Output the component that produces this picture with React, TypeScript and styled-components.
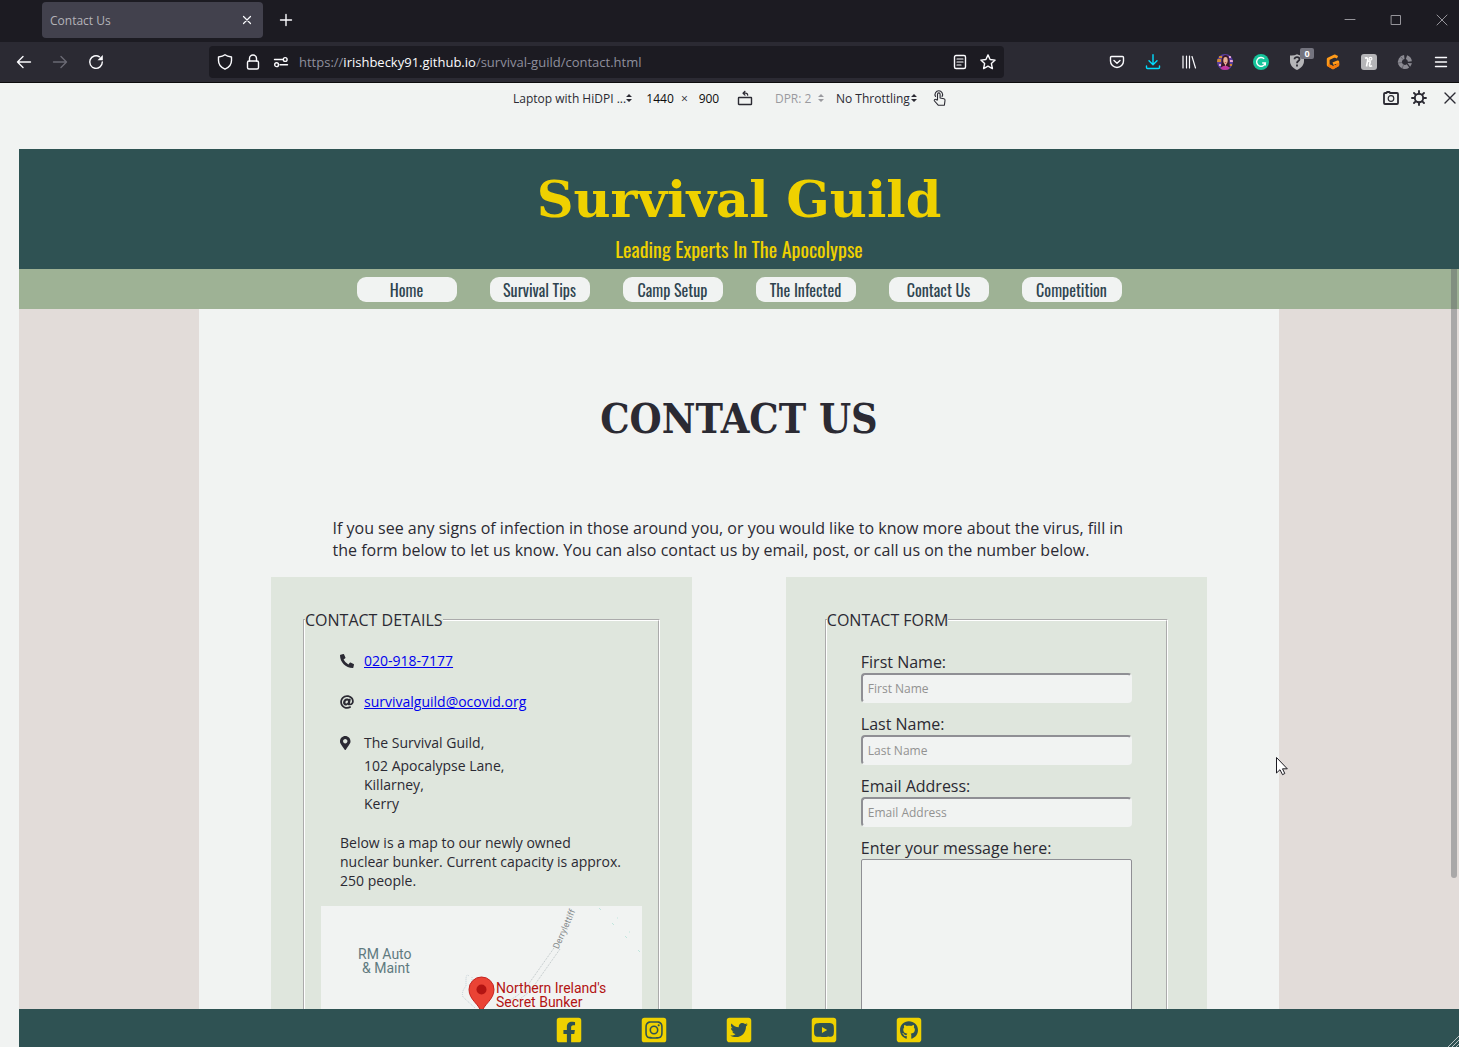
import React from "react";
import styled, { createGlobalStyle } from "styled-components";
import {
  FaAt,
  FaFacebookSquare,
  FaGithubSquare,
  FaInstagramSquare,
  FaMapMarkerAlt,
  FaPhoneAlt,
  FaTwitterSquare,
  FaYoutubeSquare,
} from "react-icons/fa";

const color = {
  frame: "#1c1b22",
  toolbar: "#2b2a33",
  tab: "#42414d",
  paper: "#f1f3f2",
  teal: "#2f5253",
  yellow: "#efd100",
  sage: "#9eb295",
  mist: "#dfe6dd",
  sand: "#e2dcd9",
  ink: "#2b2a33",
};

const ui = `"Open Sans", "Noto Sans", sans-serif`;
const typewriter = `"Special Elite", "DejaVu Serif", serif`;
const typewriterCondensed = `"Special Elite", "DejaVu Serif Condensed", "DejaVu Serif", serif`;
const narrow = `Oswald, "Liberation Sans Narrow", "Roboto Condensed", sans-serif`;

const GlobalStyle = createGlobalStyle`
  *, *::before, *::after { box-sizing: border-box; }
  body { margin: 0; background: ${color.paper}; color: ${color.ink}; font-family: ${ui}; }
  button, input, select, textarea { font: inherit; color: inherit; margin: 0; }
  svg { display: block; }
`;

/* ---------- browser window ---------- */

const Window = styled.div`
  position: relative;
  display: flex;
  flex-direction: column;
  height: 100vh;
  overflow: hidden;
`;

const TabStrip = styled.header`
  display: flex;
  align-items: center;
  justify-content: space-between;
  height: 42px;
  flex: none;
  padding-left: 42px;
  background: ${color.frame};
  color: #fbfbfe;
`;

const Tabs = styled.div`
  display: flex;
  align-items: center;
  gap: 8px;
  padding-bottom: 2px;
`;

const Tab = styled.div`
  display: flex;
  align-items: center;
  justify-content: space-between;
  width: 221px;
  height: 36px;
  padding: 0 4px 0 8px;
  border-radius: 4px;
  background: ${color.tab};
  color: #b4b3b9;
  font-size: 12px;
`;

const IconButton = styled.button<{ $w?: number; $h?: number; $tone?: string }>`
  display: grid;
  place-items: center;
  position: relative;
  flex: none;
  width: ${(p) => p.$w ?? 36}px;
  height: ${(p) => p.$h ?? 32}px;
  padding: 0;
  border: 0;
  background: none;
  color: ${(p) => p.$tone ?? "#fbfbfe"};
`;

const WindowButtons = styled.div`
  display: flex;
  gap: 12px;
  padding-bottom: 2px;
`;

const NavBar = styled.div`
  display: flex;
  align-items: center;
  height: 41px;
  flex: none;
  padding-left: 6px;
  background: ${color.toolbar};
  border-bottom: 1px solid #0c0c0d;
  color: #fbfbfe;
`;

const AddressBar = styled.div`
  display: flex;
  align-items: center;
  flex: 1;
  min-width: 0;
  height: 32px;
  margin: 0 95px;
  padding: 0 2px;
  border-radius: 4px;
  background: ${color.frame};
`;

const Address = styled.div`
  flex: 1;
  padding-left: 4px;
  overflow: hidden;
  white-space: nowrap;
  font-size: 13px;
  color: #8f8f9d;
  strong { font-weight: 400; color: #fbfbfe; }
`;

const Badge = styled.span`
  position: absolute;
  top: 2px;
  left: 21px;
  width: 14px;
  height: 11px;
  border-radius: 2px;
  background: #74747f;
  color: #fff;
  font-size: 9px;
  font-weight: 700;
  line-height: 11px;
`;

/* ---------- responsive design toolbar ---------- */

const DeviceBar = styled.div`
  display: grid;
  grid-template-columns: 1fr auto 1fr;
  align-items: center;
  height: 30px;
  flex: none;
  font-size: 12px;
`;

const DeviceControls = styled.div`
  display: flex;
  align-items: center;
  grid-column: 2;
  padding-left: 7px;
`;

const DeviceActions = styled.div`
  display: flex;
  justify-content: flex-end;
  align-items: center;
  button:last-child { margin-left: 8px; }
`;

const Picker = styled.label<{ $w: number; $muted?: boolean }>`
  display: flex;
  align-items: center;
  width: ${(p) => p.$w}px;
  color: ${(p) => (p.$muted ? "#9a9a9f" : color.ink)};
  select {
    appearance: none;
    flex: 1;
    min-width: 0;
    padding: 0;
    border: 0;
    background: none;
    opacity: 1;
  }
`;

const SizeInput = styled.input`
  width: 34px;
  padding: 0;
  border: 0;
  background: none;
  text-align: center;
  color: #0c0c0d;
`;

const Sizes = styled.div`
  display: flex;
  align-items: center;
  gap: 4px;
  margin: 0 4px 0 11px;
`;

const Ratio = styled.div`
  margin: 0 12px 0 15px;
`;

const Throttle = styled.div`
  margin-right: 8px;
`;

/* ---------- site ---------- */

const Site = styled.div`
  position: relative;
  display: flex;
  flex-direction: column;
  flex: 1;
  min-height: 0;
  margin: 36px 0 0 19px;
  background: ${color.sand};
`;

const Masthead = styled.header`
  flex: none;
  height: 120px;
  padding-top: 20px;
  background: ${color.teal};
  color: ${color.yellow};
  text-align: center;
`;

const SiteName = styled.p`
  margin: 0;
  font: 700 51px/60px ${typewriter};
`;

const Tagline = styled.p`
  margin: 5px 0 0;
  font: 400 20px/30px ${narrow};
`;

const Menu = styled.nav`
  display: flex;
  justify-content: center;
  gap: 33px;
  flex: none;
  height: 40px;
  padding-top: 8px;
  background: ${color.sage};
`;

const MenuLink = styled.a`
  width: 100px;
  height: 25px;
  border-radius: 9px;
  background: ${color.paper};
  color: #2f4550;
  font: 400 16px/26px ${narrow};
  text-align: center;
  text-decoration: none;
`;

const Scroller = styled.div`
  flex: 1;
  min-height: 0;
  overflow: hidden;
`;

const Main = styled.main`
  width: 75%;
  margin: 0 auto;
  background: ${color.paper};
`;

const PageTitle = styled.h1`
  margin: 0;
  padding: 80px 0 68px;
  font: 700 41px/60px ${typewriterCondensed};
  text-align: center;
`;

const Intro = styled.p`
  margin: 0 auto 16px;
  max-width: 813px;
  font-size: 16px;
  line-height: 22px;
`;

const Cards = styled.div`
  display: flex;
  justify-content: space-between;
  padding: 0 72px;
`;

const Card = styled.section<{ $side: number }>`
  width: 45%;
  padding: 32px ${(p) => p.$side}px;
  background: ${color.mist};
`;

const Group = styled.fieldset`
  min-width: 0;
  margin: 0;
  padding: 0;
  border: 2px groove #ffffff;
  legend {
    padding: 0;
    font-size: 16px;
    line-height: 22px;
  }
`;

const GroupBody = styled.div<{ $side: number }>`
  padding: 20px ${(p) => p.$side}px 32px;
`;

const Details = styled.div`
  padding: 0 20px 0 19px;
  font-size: 14px;
  line-height: 19px;
  a { color: #0000ee; }
  p { margin: 20px 0 16px; }
`;

const Rows = styled.ul`
  display: grid;
  gap: 22px;
  margin: 0;
  padding: 0;
  list-style: none;
`;

const Row = styled.li`
  display: grid;
  grid-template-columns: 24px 1fr;
  align-items: center;
`;

const PostalAddress = styled.address`
  margin: 4px 0 0 24px;
  font-style: normal;
`;

const MapFrame = styled.figure`
  position: relative;
  height: 220px;
  margin: 0;
  overflow: hidden;
  background: ${color.paper};
  font: 14px/14px Roboto, sans-serif;
`;

const MapLabel = styled.span<{ $x: number; $y: number; $tone: string }>`
  position: absolute;
  left: ${(p) => p.$x}px;
  top: ${(p) => p.$y}px;
  color: ${(p) => p.$tone};
  white-space: nowrap;
`;

const RoadLabel = styled(MapLabel)`
  font-size: 9px;
  transform: rotate(-66deg);
`;

const Field = styled.div`
  margin-bottom: 10px;
  label {
    display: block;
    font-size: 16px;
    line-height: 22px;
  }
`;

const TextInput = styled.input`
  display: block;
  width: 100%;
  height: 30px;
  padding: 0 5px;
  border: 2px solid;
  border-color: #8f8f94 ${color.paper} ${color.paper} #8f8f94;
  border-radius: 4px;
  background: ${color.paper};
  font: 12px ${ui};
  &::placeholder { color: #929291; opacity: 1; }
`;

const Message = styled.textarea`
  display: block;
  width: 100%;
  height: 240px;
  border: 1px solid #8f8f94;
  border-radius: 2px;
  background: ${color.paper};
  resize: none;
`;

const Footer = styled.footer`
  display: flex;
  justify-content: center;
  gap: 57px;
  flex: none;
  height: 38px;
  padding-top: 7px;
  background: ${color.teal};
  font-size: 28px;
  a { color: ${color.yellow}; height: 28px; }
`;

const ScrollThumb = styled.div`
  position: absolute;
  top: 120px;
  right: 2px;
  width: 6px;
  height: 609px;
  border-radius: 0 0 3px 3px;
  background: rgba(90, 95, 100, 0.42);
`;

const Resizer = styled.svg`
  position: absolute;
  right: 0;
  bottom: 0;
`;

const Pointer = styled.svg`
  position: absolute;
  left: 1275px;
  top: 756px;
`;

/* ---------- icons ---------- */

const Icon = ({ size = 16, children, w = 1.4 }: { size?: number; w?: number; children: React.ReactNode }) => (
  <svg
    width={size}
    height={size}
    viewBox="0 0 16 16"
    fill="none"
    stroke="currentColor"
    strokeWidth={w}
    strokeLinecap="round"
    strokeLinejoin="round"
    aria-hidden="true"
  >
    {children}
  </svg>
);

const UpDown = () => (
  <svg width="6" height="8" viewBox="0 0 6 8" fill="currentColor" aria-hidden="true">
    <path d="M3 0 6 3H0zM3 8 0 5h6z" />
  </svg>
);

const fields = [
  { id: "first", label: "First Name:", hint: "First Name", type: "text" },
  { id: "last", label: "Last Name:", hint: "Last Name", type: "text" },
  { id: "email", label: "Email Address:", hint: "Email Address", type: "email" },
];

const menu = ["Home", "Survival Tips", "Camp Setup", "The Infected", "Contact Us", "Competition"];

const social = [
  { name: "Facebook", Glyph: FaFacebookSquare },
  { name: "Instagram", Glyph: FaInstagramSquare },
  { name: "Twitter", Glyph: FaTwitterSquare },
  { name: "YouTube", Glyph: FaYoutubeSquare },
  { name: "GitHub", Glyph: FaGithubSquare },
];

function BrowserChrome() {
  return (
    <>
      <TabStrip>
        <Tabs>
          <Tab>
            Contact Us
            <IconButton $w={24} $h={24} aria-label="Close tab">
              <Icon w={1.2}><path d="m4.5 4.5 7 7m0-7-7 7" /></Icon>
            </IconButton>
          </Tab>
          <IconButton $w={30} aria-label="New tab">
            <Icon><path d="M8 2.5v11M2.5 8h11" /></Icon>
          </IconButton>
        </Tabs>
        <WindowButtons>
          <IconButton $w={34} $tone="#96959b" aria-label="Minimize">
            <Icon w={1}><path d="M3 7.5h10" /></Icon>
          </IconButton>
          <IconButton $w={34} $tone="#96959b" aria-label="Maximize">
            <Icon w={1}><path d="M3.5 3.5h9v9h-9z" strokeLinejoin="miter" /></Icon>
          </IconButton>
          <IconButton $w={34} $tone="#96959b" aria-label="Close window">
            <Icon w={1}><path d="m3 3 10 10M13 3 3 13" /></Icon>
          </IconButton>
        </WindowButtons>
      </TabStrip>

      <NavBar>
        <IconButton aria-label="Back">
          <Icon><path d="M14.5 8h-13M7 2.5 1.5 8 7 13.5" /></Icon>
        </IconButton>
        <IconButton $tone="#6a6974" aria-label="Forward">
          <Icon><path d="M1.5 8h13M9 2.5 14.5 8 9 13.5" /></Icon>
        </IconButton>
        <IconButton aria-label="Reload">
          <Icon>
            <path d="M14.3 8A6.3 6.3 0 1 1 11.5 2.8" />
            <path d="M14.8 1v5.3H9.5z" fill="currentColor" stroke="none" />
          </Icon>
        </IconButton>

        <AddressBar>
          <IconButton $w={28} aria-label="Tracking protection">
            <Icon><path d="M8 .8C9.5 2 12 2.7 14.5 3v3.5c0 4-2.5 7-6.5 8.7C4 13.5 1.5 10.5 1.5 6.5V3C4 2.7 6.5 2 8 .8z" /></Icon>
          </IconButton>
          <IconButton $w={28} aria-label="Site security">
            <Icon>
              <rect x="2.5" y="7" width="11" height="8" rx="1.5" />
              <path d="M4.5 7V4.5a3.5 3.5 0 0 1 7 0V7" />
            </Icon>
          </IconButton>
          <IconButton $w={28} aria-label="Permissions">
            <Icon>
              <path d="M1.5 5.5h8M7 10.7h7.5" />
              <circle cx="12.2" cy="5.5" r="1.9" />
              <circle cx="3.6" cy="10.7" r="1.9" />
            </Icon>
          </IconButton>
          <Address role="textbox" aria-label="Address" contentEditable suppressContentEditableWarning spellCheck={false}>
            https://<strong>irishbecky91.github.io</strong>/survival-guild/contact.html
          </Address>
          <IconButton $w={28} aria-label="Reader view">
            <Icon>
              <rect x="2.5" y="1.5" width="11" height="13" rx="1.5" />
              <path d="M5 5h6M5 8h6M5 11h4" strokeWidth="1.2" />
            </Icon>
          </IconButton>
          <IconButton $w={28} aria-label="Bookmark">
            <Icon>
              <path d="m8 .9 2.1 4.6 5 .6-3.7 3.5 1 5L8 12.1l-4.4 2.5 1-5L.9 6.1l5-.6z" />
            </Icon>
          </IconButton>
        </AddressBar>

        <IconButton aria-label="Pocket">
          <Icon>
            <path d="M2.5 2.5h11a1 1 0 0 1 1 1V7a6.5 6.5 0 0 1-13 0V3.500a1 1 0 0 1 1-1z" />
            <path d="M5 6.5 8 9.3l3-2.8" />
          </Icon>
        </IconButton>
        <IconButton $tone="#00ddff" aria-label="Downloads">
          <Icon><path d="M8 .8v9.5M4 6.8l4 4 4-4M1.500 12v1.500a1 1 0 0 0 1 1h11a1 1 0 0 0 1-1V12" /></Icon>
        </IconButton>
        <IconButton aria-label="Library">
          <Icon w={1.2}><path d="M2 2v12M5.5 2v12M8.5 2v12M11 2.5l3.500 11.500" /></Icon>
        </IconButton>
        <IconButton aria-label="Account">
          <svg width="16" height="16" viewBox="0 0 16 16" aria-hidden="true">
            <clipPath id="face"><circle cx="8" cy="8" r="8" /></clipPath>
            <g clipPath="url(#face)">
              <path fill="#5b3fa0" d="M0 0h16v16H0z" />
              <path fill="#d08a34" d="M0 5h4v3H0zM2 2h3v2H2z" />
              <path fill="#e8a6d8" d="M13 6h3v2h-3zM2 10h2v2H2zM12 2h2v2h-2z" />
              <path fill="#d08a34" d="M12 10h3v2h-3z" />
              <path fill="#3b1828" d="M5 4c1-4 6-4 7 0l1 9H4z" />
              <ellipse cx="8.5" cy="6.5" rx="2.2" ry="3.4" fill="#e8b196" />
              <path fill="#c2379f" d="M3 16c1-5 9-6 10 0z" />
              <path fill="#e8b196" d="M7.3 9h2.2l-.8 3.5z" />
              <path fill="#b92f3c" d="M7.5 8h2l-1 .9z" />
            </g>
          </svg>
        </IconButton>
        <IconButton aria-label="Grammar checker">
          <svg width="16" height="16" viewBox="0 0 16 16" fill="none" aria-hidden="true">
            <circle cx="8" cy="8" r="8" fill="#15c39a" />
            <path d="M11.2 4.8A4.4 4.4 0 1 0 12.3 9H9.2m3.1 0v2.6" stroke="#fff" strokeWidth="1.4" />
          </svg>
        </IconButton>
        <IconButton aria-label="Privacy extension">
          <svg width="16" height="16" viewBox="0 0 16 16" fill="none" aria-hidden="true">
            <path d="M1 1.5Q5 2 8 .2 11 2 15 1.500V7c0 4-2.500 7-7 9C3.500 14 1 11 1 7z" fill="#b5b5b8" />
            <path d="M5.5 5.3C5.5 2.3 10.5 2.5 10.5 5.2 10.5 7.2 8 7 8 9.2M8 10.5v2" stroke="#2b2a33" strokeWidth="1.8" />
          </svg>
          <Badge>0</Badge>
        </IconButton>
        <IconButton aria-label="Price tracker">
          <svg width="16" height="16" viewBox="0 0 16 16" fill="none" strokeLinejoin="round" aria-hidden="true">
            <path d="M12.5 3.2 9.5 1.9 3.2 5v6l4.8 2.8 4.8-2.8V7.8L8 9.8" stroke="#ff9b1a" strokeWidth="2.8" />
            <path d="M3.2 11l4.8 2.8 4.8-2.8V9" stroke="#f27a0c" strokeWidth="2.8" />
          </svg>
        </IconButton>
        <IconButton aria-label="Coupons">
          <svg width="16" height="16" viewBox="0 0 16 16" fill="none" aria-hidden="true">
            <rect width="16" height="16" rx="3" fill="#b5b5b8" />
            <path d="M4 4.200c2-1 3 .3 2.700 2L5.500 12.500M6.300 8c1.500-1.500 3-1.300 2.800.3L8.500 11c-.2 1.500 1.500 1.500 2.500.6" stroke="#fff" strokeWidth="1.6" />
            <circle cx="9.5" cy="4.7" r="1.4" stroke="#fff" strokeWidth="1.2" />
          </svg>
        </IconButton>
        <IconButton $tone="#8b8a92" aria-label="Site data extension">
          <svg width="16" height="16" viewBox="0 0 16 16" fill="none" stroke="currentColor" aria-hidden="true">
            <path d="M11 11.900A5 5 0 1 1 7.300 3" strokeWidth="4" />
            <path d="M9.500 3.200A5 5 0 0 1 12.900 7.500" strokeWidth="4" />
            <path d="m10.500 9 4.500.2-1.800 3.500z" fill="currentColor" stroke="none" />
            <path d="m3.500 2.500 2.500 3M1 9l4-.5M5 14.500l1.500-3.500" stroke="#5a5963" strokeWidth=".8" />
          </svg>
        </IconButton>
        <IconButton aria-label="Application menu">
          <Icon w={1.4}><path d="M2.5 3.5h11M2.500 8h11M2.500 12.500h11" /></Icon>
        </IconButton>
      </NavBar>
    </>
  );
}

function DeviceToolbar() {
  return (
    <DeviceBar>
      <DeviceControls>
        <Picker $w={119}>
          <select aria-label="Device"><option>Laptop with HiDPI ...</option></select>
          <UpDown />
        </Picker>
        <Sizes>
          <SizeInput aria-label="Width" defaultValue="1440" />
          <span>×</span>
          <SizeInput aria-label="Height" defaultValue="900" />
        </Sizes>
        <IconButton $w={30} $h={28} $tone={color.ink} aria-label="Rotate viewport">
          <Icon>
            <rect x="1.5" y="7.5" width="13" height="7" rx=".5" />
            <path d="M6.5 3.2h2.2a2 2 0 0 1 2 2M8 1.300l-2 1.900 2 1.900" strokeWidth="1.2" />
          </Icon>
        </IconButton>
        <Ratio>
          <Picker $w={49} $muted>
            <select aria-label="Pixel ratio" disabled><option>DPR: 2</option></select>
            <UpDown />
          </Picker>
        </Ratio>
        <Throttle>
          <Picker $w={81}>
            <select aria-label="Throttling"><option>No Throttling</option></select>
            <UpDown />
          </Picker>
        </Throttle>
        <IconButton $w={28} $h={28} $tone={color.ink} aria-label="Touch simulation">
          <Icon w={1.1}>
            <path d="M6.500 10V4.200a1.300 1.300 0 0 1 2.600 0V8l3.800.8c.8.2 1.200.8 1.100 1.600l-.6 4.800H7.200L3.500 11c-.8-1.200.6-2.200 1.500-1.400z" />
            <path d="M4.5 6.5a3.8 3.8 0 1 1 6.6 0" />
          </Icon>
        </IconButton>
      </DeviceControls>
      <DeviceActions>
        <IconButton $w={28} $h={28} $tone={color.ink} aria-label="Screenshot">
          <Icon w={1.8}>
            <path d="M1 4a1 1 0 0 1 1-1h1.500l.5-1h2.500L7 3h7a1 1 0 0 1 1 1v9a1 1 0 0 1-1 1H2a1 1 0 0 1-1-1z" />
            <circle cx="8" cy="8.5" r="2.8" strokeWidth="1.2" />
          </Icon>
        </IconButton>
        <IconButton $w={28} $h={28} $tone={color.ink} aria-label="Settings">
          <Icon w={1.9}>
            <circle cx="8" cy="8" r="4.2" />
            <path d="M8 1v2.500M8 12.500V15M1 8h2.500M12.500 8H15M3 3l1.700 1.700M11.300 11.300 13 13M13 3l-1.700 1.700M4.700 11.300 3 13" />
          </Icon>
        </IconButton>
        <IconButton $w={18} $h={28} $tone={color.ink} aria-label="Close">
          <Icon w={1.4}><path d="m3 3 10 10M13 3 3 13" /></Icon>
        </IconButton>
      </DeviceActions>
    </DeviceBar>
  );
}

function BunkerMap() {
  return (
    <MapFrame>
      <svg width="321" height="220" viewBox="0 0 321 220" fill="none" aria-hidden="true">
        <g stroke="#bcc4c6" strokeDasharray="1 1">
          <path d="M233 42 209 76q-8 12-20 18M239 43l-24 34q-8 12-20 18" />
          <path d="M148 70q-3-3-3 4v6q-5 6-3 11l12 11M151 71v8" stroke="#c3cfd6" />
        </g>
        <path d="m278 2 2 2M291 17l2 2M304 30l2 2M317 44l2 2M308 26h1M296 12h1" stroke="#bfe5dd" />
        <path d="M160.500 107c-2-9-12.500-13-12.500-23.500a12.500 12.500 0 0 1 25 0c0 10.500-10.500 14.500-12.500 23.500z" fill="#ea4335" stroke="#c5221f" />
        <circle cx="160.5" cy="83.5" r="5" fill="#b31412" />
      </svg>
      <MapLabel $x={37} $y={41} $tone="#5f7a80">RM Auto</MapLabel>
      <MapLabel $x={41} $y={55} $tone="#5f7a80">&amp; Maint</MapLabel>
      <MapLabel $x={175} $y={75} $tone="#b31412">
        Northern Ireland's
        <br />
        Secret Bunker
      </MapLabel>
      <RoadLabel $x={222} $y={16} $tone="#858a8c">Derrylettiff</RoadLabel>
    </MapFrame>
  );
}

export default function App() {
  return (
    <Window>
      <GlobalStyle />
      <BrowserChrome />
      <DeviceToolbar />
      <Site>
        <Masthead>
          <SiteName>Survival Guild</SiteName>
          <Tagline>Leading Experts In The Apocolypse</Tagline>
        </Masthead>
        <Menu>
          {menu.map((item) => (
            <MenuLink key={item} href="#">{item}</MenuLink>
          ))}
        </Menu>
        <Scroller>
          <Main>
            <PageTitle>CONTACT US</PageTitle>
            <Intro>
              If you see any signs of infection in those around you, or you would like to know more about the virus,
              fill in the form below to let us know. You can also contact us by email, post, or call us on the number
              below.
            </Intro>
            <Cards>
              <Card $side={32}>
                <Group>
                  <legend>CONTACT DETAILS</legend>
                  <GroupBody $side={16}>
                    <Details>
                      <Rows>
                        <Row>
                          <FaPhoneAlt />
                          <span><a href="tel:0209187177">020-918-7177</a></span>
                        </Row>
                        <Row>
                          <FaAt />
                          <span><a href="mailto:survivalguild@ocovid.org">survivalguild@ocovid.org</a></span>
                        </Row>
                        <Row>
                          <FaMapMarkerAlt preserveAspectRatio="xMinYMid meet" />
                          <span>The Survival Guild,</span>
                        </Row>
                      </Rows>
                      <PostalAddress>
                        102 Apocalypse Lane,
                        <br />
                        Killarney,
                        <br />
                        Kerry
                      </PostalAddress>
                      <p>
                        Below is a map to our newly owned nuclear bunker. Current capacity is approx. 250 people.
                      </p>
                    </Details>
                    <BunkerMap />
                  </GroupBody>
                </Group>
              </Card>
              <Card $side={39}>
                <Group>
                  <legend>CONTACT FORM</legend>
                  <GroupBody $side={34}>
                    {fields.map((f) => (
                      <Field key={f.id}>
                        <label htmlFor={f.id}>{f.label}</label>
                        <TextInput id={f.id} type={f.type} placeholder={f.hint} />
                      </Field>
                    ))}
                    <Field>
                      <label htmlFor="message">Enter your message here:</label>
                      <Message id="message" />
                    </Field>
                  </GroupBody>
                </Group>
              </Card>
            </Cards>
          </Main>
        </Scroller>
        <Footer>
          {social.map(({ name, Glyph }) => (
            <a key={name} href="#" aria-label={name}><Glyph /></a>
          ))}
        </Footer>
        <ScrollThumb />
        <Resizer width="12" height="12" viewBox="0 0 12 12" stroke="#b9c2c4" aria-hidden="true">
          <path d="M1 12 12 1M5 12l7-7M9 12l3-3" />
        </Resizer>
      </Site>
      <Pointer width="14" height="20" viewBox="0 0 14 20" aria-hidden="true">
        <path d="M1.5 1.5v15.500l3.500-3.300 2.500 5 2.300-1.200-2.300-4.700h4.800z" fill="#fff" stroke="#1c1b22" />
      </Pointer>
    </Window>
  );
}
